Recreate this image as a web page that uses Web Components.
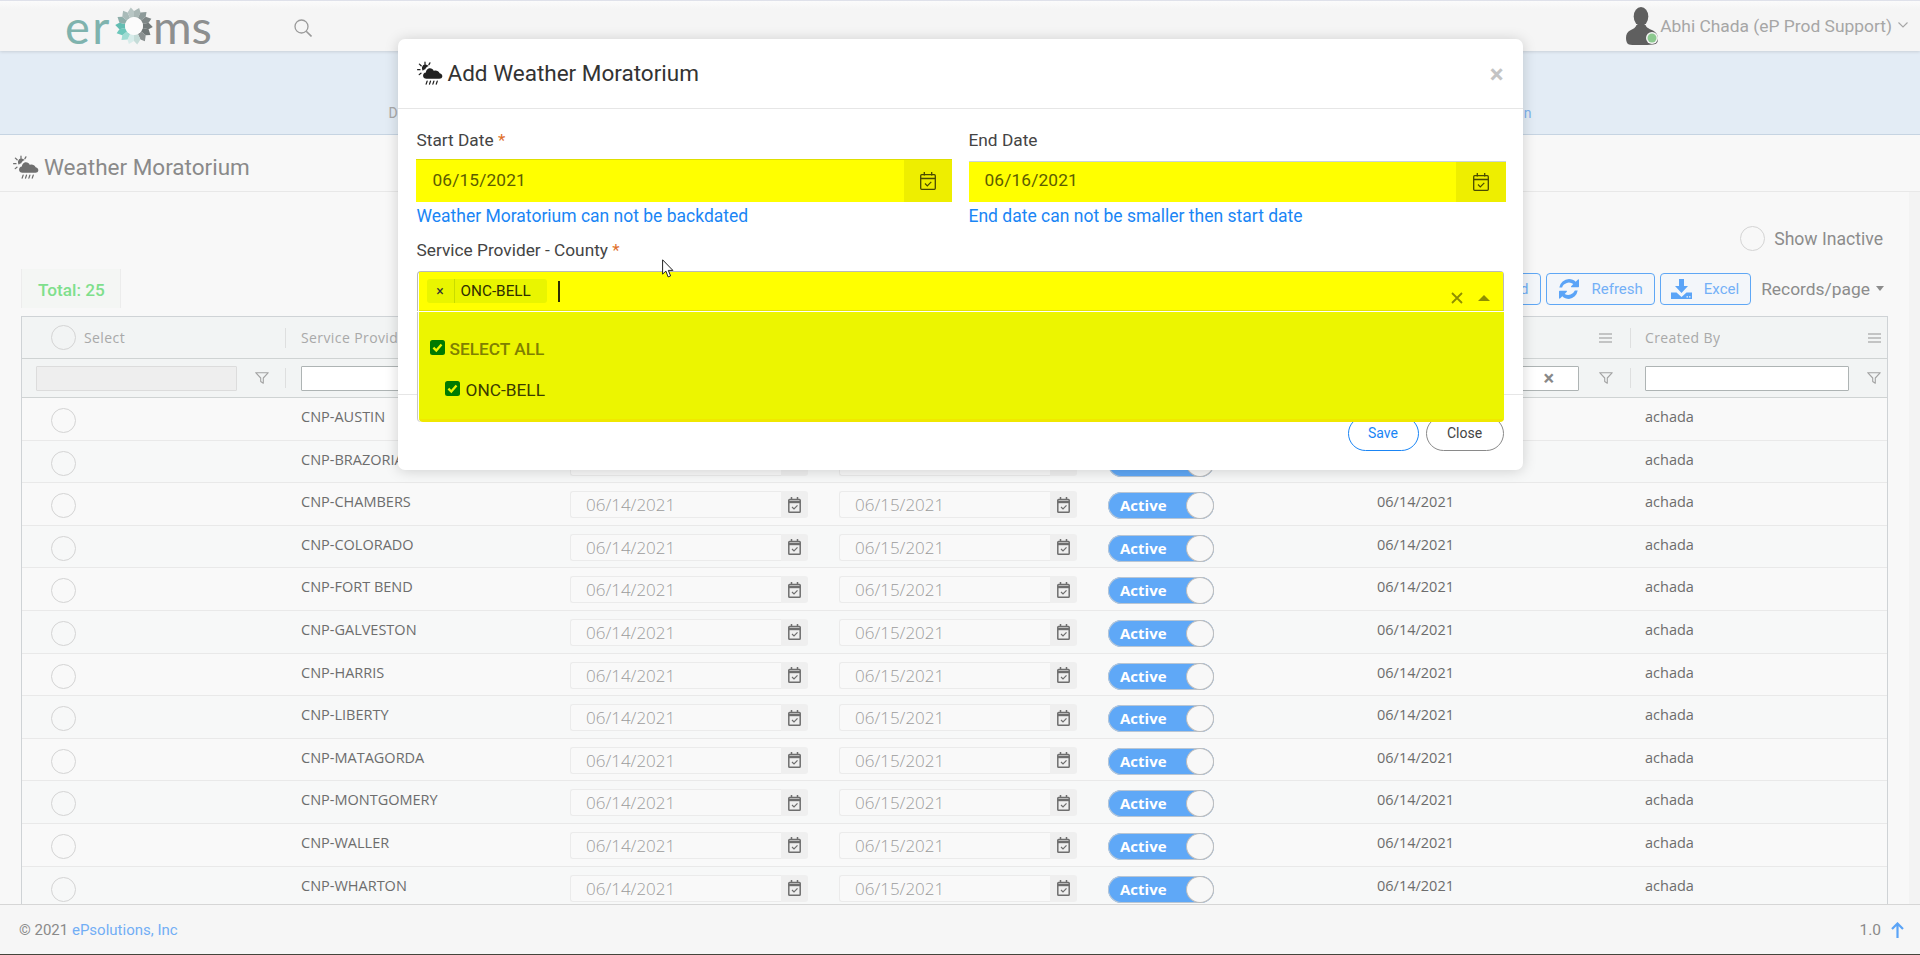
<!DOCTYPE html>
<html lang="en">
<head>
<meta charset="utf-8">
<title>Weather Moratorium</title>
<style>
  html,body{margin:0;padding:0;height:955px;overflow:hidden;}
  body{display:flex;flex-direction:column;font-family:Roboto,"Liberation Sans",sans-serif;background:#f8f8f8;color:#777;position:relative;}
</style>
</head>
<body>
<app-header></app-header>
<info-band></info-band>
<page-title></page-title>
<page-content></page-content>
<app-footer></app-footer>
<weather-modal></weather-modal>

<script>
const ICONS = {
  weather:(c)=>`<svg viewBox="0 0 27 24" width="100%" height="100%"><g fill="${c}"><path d="M6.5 3.6a5 5 0 0 1 5.7 1.2c-1.7.5-3 1.7-3.6 3.2-1.1.2-2 .8-2.6 1.6a5 5 0 0 1 .5-6z"/><path d="M12 7.2c2-.7 4.6.1 5.500 2.600 2.600-.900 5 .5 6 2.500 2 .500 3 2 2.800 3.400-.2 1.500-1.500 2.300-3 2.300H9.800c-2 0-3.500-1.300-3.500-3.200 0-1.700 1.200-3 2.900-3.200 0-1.900 1-3.700 2.800-4.400z"/></g><g stroke="${c}" stroke-width="1.300" fill="none" stroke-linecap="round"><path d="M8.300 .8v2.400M2.500 2.800l1.800 1.700M.6 8.600h2.500M2.300 13.700l1.800-1.500M13.400 1.500l-1 1.800"/><path d="M10.500 20.500l-1 3M14 20.500l-1 3M17.500 20.500l-1 3M21 20.500l-1 3"/></g></svg>`,
  calendar:(c)=>`<svg viewBox="0 0 16 18" width="100%" height="100%" fill="none" stroke="${c}" stroke-width="1.300"><rect x=".7" y="2.700" width="14.600" height="14.600" rx="1"/><path d="M.7 6.500h14.600M4.300 0v3.500M11.700 0v3.500"/><path d="M5 11.500l2.300 2.300 4-4" stroke-width="1.200"/></svg>`,
  calendarSmall:(c)=>`<svg viewBox="0 0 13 16" width="100%" height="100%" fill="none" stroke="${c}"><rect x=".8" y="2.500" width="11.400" height="12.700" rx=".8" stroke-width="1.500"/><path d="M.8 5h11.400" stroke-width="2.400"/><path d="M3.500 0v3M9.500 0v3" stroke-width="1.500"/><path d="M4 10l2 2 3.500-3.700" stroke-width="1.200"/></svg>`,
  funnel:(c)=>`<svg viewBox="0 0 14 12" width="100%" height="100%" fill="none" stroke="${c}" stroke-width="1.100" stroke-linejoin="round"><path d="M.7.700h12.600L8.300 6v5.200L5.700 9.500V6z"/></svg>`,
  menu:(c)=>`<svg viewBox="0 0 13 10" width="100%" height="100%" fill="none" stroke="${c}" stroke-width="1.300"><path d="M0 1h13M0 5h13M0 9h13"/></svg>`,
  search:(c)=>`<svg viewBox="0 0 18 18" width="100%" height="100%" fill="none" stroke="${c}" stroke-width="1.300"><circle cx="7.500" cy="7.500" r="6.500"/><path d="M12.200 12.200L17.500 17.500" stroke-width="1.600"/></svg>`,
  refresh:(c)=>`<svg viewBox="0 0 20 20" width="100%" height="100%" fill="${c}"><path d="M10 0c2.600 0 5 1 6.700 2.700L19 .5c.4-.4 1 0 1 .5v6.600c0 .4-.3.700-.7.700h-6.600c-.6 0-1-.7-.5-1.100l2.100-2.100A7.200 7.200 0 0 0 3.100 8.400H.3A10 10 0 0 1 10 0z"/><path d="M10 20c-2.600 0-5-1-6.700-2.700L1 19.500c-.4.400-1 0-1-.5v-6.600c0-.4.300-.7.700-.7h6.600c.6 0 1 .7.500 1.100l-2.100 2.100a7.200 7.200 0 0 0 10.200-3.300h2.800A10 10 0 0 1 10 20z"/></svg>`,
  download:(c)=>`<svg viewBox="0 0 21 20" width="100%" height="100%"><path fill="${c}" d="M8 0h5v7h4l-6.500 7L4 7h4z"/><path fill="${c}" d="M0 13.500h5.500l5 4.500 5-4.500H21V20H0z"/><path fill="#f3f6fa" d="M15.500 17.300h1.500v1.300h-1.500zM18 17.300h1.500v1.300H18z"/></svg>`,
  check:()=>`<svg viewBox="0 0 15 15" width="100%" height="100%"><rect width="15" height="15" rx="2.500" fill="#007a00"/><path d="M3.400 7.600l2.900 2.900 5.200-6" fill="none" stroke="#ecf500" stroke-width="2.300"/></svg>`,
  avatar:()=>`<svg viewBox="0 0 34 38" width="100%" height="100%"><ellipse cx="15" cy="9.500" rx="7.300" ry="9.500" fill="#5f5f5f"/><path d="M10.500 18c-1 3-3 3.500-6.500 5.500C1.300 25 0 27.500 0 31c0 3 1 6 3 6.500 4 1 15 1 24 0 4-.5 5-2 5-6 0-3.500-2-6.500-5-8-3-1.500-6.500-2.500-7.500-5.500z" fill="#5f5f5f"/><circle cx="26" cy="31" r="6" fill="#f5f5f5"/><circle cx="26" cy="31" r="4.500" fill="#8cc98f"/></svg>`,
  pointer:()=>`<svg viewBox="0 0 12 19" width="100%" height="100%"><path d="M.6.800v14.300l3.300-3 2.200 5.800 2.500-1-2.300-5.500h4.600z" fill="#fff" stroke="#222" stroke-width="1"/></svg>`
};
class XIcon extends HTMLElement{
  connectedCallback(){
    const r=this.attachShadow({mode:'open'});
    const w=this.getAttribute('w'),h=this.getAttribute('h');
    r.innerHTML=`<style>:host{display:inline-block;flex:none;line-height:0;width:${w}px;height:${h}px}</style>`+ICONS[this.getAttribute('name')](this.getAttribute('color')||'#666');
  }
}
customElements.define('x-icon',XIcon);

class GearMark extends HTMLElement{
  connectedCallback(){
    const r=this.attachShadow({mode:'open'});
    const n=14, colors=['#a9b7b5','#8d9a99','#7f8787','#737a7a','#6f7676','#8b9191','#c5dcd8','#d7ecea','#9fdcd3','#6cc7bb','#62bdb2','#8eaeaa','#a8bab8','#b8c6c4'];
    let polys='';
    for(let i=0;i<n;i++){
      const a0=(i/n)*Math.PI*2-Math.PI/2, st=Math.PI*2/n;
      const pt=(a,rad)=>`${(19+rad*Math.cos(a)).toFixed(2)},${(19+rad*Math.sin(a)).toFixed(2)}`;
      polys+=`<polygon fill="${colors[i]}" points="${pt(a0,9)} ${pt(a0,15)} ${pt(a0+st*.62,18.800)} ${pt(a0+st,15)} ${pt(a0+st,9)}"/>`;
    }
    r.innerHTML=`<style>:host{display:inline-block;width:38px;height:38px;flex:none;line-height:0}</style><svg viewBox="0 0 38 38" width="38" height="38">${polys}<circle cx="19" cy="19" r="9" fill="#fbfbfb"/></svg>`;
  }
}
customElements.define('gear-mark',GearMark);

class AppHeader extends HTMLElement{
  constructor(){super();this.attachShadow({mode:'open'}).innerHTML=`<style>
    :host{display:flex;align-items:center;height:51px;flex:none;box-sizing:border-box;border-top:1px solid #dfe1ea;background:linear-gradient(#fbfbfb,#f5f5f5 8px);box-shadow:0 1px 3px rgba(0,0,0,.12);position:relative;z-index:2;padding:0 12px 0 65px;}
    .logo{display:flex;align-items:center;width:143px;font-family:Lato,sans-serif;font-size:47px;line-height:38px;height:38px;margin-top:-1px}
    .er{color:#7fb3ae;font-weight:400;margin-right:3px;letter-spacing:2.500px}.ms{color:#8d8f8f;font-weight:400}
    gear-mark{margin-right:0}
    .search{margin-left:86px;margin-top:4px}
    .user{margin-left:auto;display:flex;align-items:center;font-size:17.400px;color:#a6a6a6;}
    .chev{margin-left:6px;margin-bottom:3px}
  </style>
  <div class="logo"><span class="er">er</span><gear-mark></gear-mark><span class="ms">ms</span></div>
  <x-icon class="search" name="search" w="18" h="18" color="#9a9a9a"></x-icon>
  <div class="user"><x-icon name="avatar" w="34" h="38"></x-icon><span>Abhi Chada (eP Prod Support)</span>
  <svg class="chev" width="10" height="6" viewBox="0 0 10 6" fill="none" stroke="#a6a6a6" stroke-width="1.100"><path d="M.5.500L5 5l4.500-4.500"/></svg></div>`;}
}
customElements.define('app-header',AppHeader);

class InfoBand extends HTMLElement{
  constructor(){super();this.attachShadow({mode:'open'}).innerHTML=`<style>
    :host{display:flex;flex:none;height:84px;box-sizing:border-box;background:#e3ecf5;border-bottom:1px solid #c6d4e2;justify-content:center;align-items:flex-end;padding-bottom:13px;font-size:14px}
    div{width:1143px;display:flex;justify-content:space-between}
    .a{color:#a8a8a8}.b{color:#7fb2ee}
  </style><div><span class="a">D</span><span class="b">n</span></div>`;}
}
customElements.define('info-band',InfoBand);

class PageTitle extends HTMLElement{
  constructor(){super();this.attachShadow({mode:'open'}).innerHTML=`<style>
    :host{display:flex;flex:none;align-items:center;height:57px;box-sizing:border-box;border-bottom:1px solid #e8e8e8;padding:8px 0 0 13px;font-size:22.500px;color:#8a8a8a}
    x-icon{margin-right:5px}
  </style><x-icon name="weather" w="26" h="24" color="#6f6f6f"></x-icon><span>Weather Moratorium</span>`;}
}
customElements.define('page-title',PageTitle);

class RadioCircle extends HTMLElement{
  constructor(){super();this.attachShadow({mode:'open'}).innerHTML=`<style>
    :host{display:inline-block;flex:none;width:25px;height:25px;box-sizing:border-box;border:1px solid #d4d4d4;border-radius:50%;background:transparent}
  </style>`;}
}
customElements.define('radio-circle',RadioCircle);

class ToolButton extends HTMLElement{
  constructor(){super();this.attachShadow({mode:'open'}).innerHTML=`<style>
    :host{display:inline-flex;align-items:center;gap:var(--gap,13px);height:32px;box-sizing:border-box;padding:0 11px 0 var(--pl,12px);border:1px solid #5fa7f5;border-radius:4px;color:#73b0f7;font-size:15px;background:#f3f6fa;margin-left:var(--ml,0)}
  </style><slot name="i"></slot><slot></slot>`;}
}
customElements.define('tool-button',ToolButton);

class DateField extends HTMLElement{
  constructor(){super();this.attachShadow({mode:'open'}).innerHTML=`<style>
    :host{display:inline-flex;flex:none;height:27px;width:238px;box-sizing:border-box;font-size:17px;color:#9c9c9c}
    .v{flex:1;box-sizing:border-box;border:1px solid #ebebeb;border-right:0;border-radius:3px 0 0 3px;padding-left:15px;line-height:26px;background:#f9f9f9;font-weight:300}
    .a{width:27px;background:#efefef;border-radius:0 3px 3px 0;display:flex;align-items:center;justify-content:center}
  </style><div class="v"><slot></slot></div><div class="a"><x-icon name="calendarSmall" w="13" h="16" color="#6e6e6e"></x-icon></div>`;}
}
customElements.define('date-field',DateField);

class ToggleSwitch extends HTMLElement{
  constructor(){super();this.attachShadow({mode:'open'}).innerHTML=`<style>
    :host{display:inline-flex;flex:none;width:106px;height:27px;box-sizing:border-box;border-radius:14px;background:#5fa8f7;position:relative;color:#fff;font-weight:700;font-size:15px;line-height:27px;padding-left:12px;box-shadow:inset 0 0 0 1px #b9c6d4}
    i{position:absolute;right:0;top:0;width:28px;height:27px;box-sizing:border-box;border-radius:50%;background:#f8f8f8;border:1px solid #bdbdbd}
  </style><slot></slot><i></i>`;}
}
customElements.define('toggle-switch',ToggleSwitch);

class DataTable extends HTMLElement{
  connectedCallback(){
    const names=['AUSTIN','BRAZORIA','CHAMBERS','COLORADO','FORT BEND','GALVESTON','HARRIS','LIBERTY','MATAGORDA','MONTGOMERY','WALLER','WHARTON'];
    const heads=['Service Provider','Start Date','End Date','Status','Created Date','Created By'];
    const menu=`<x-icon name="menu" w="13" h="10" color="#b4b4b4"></x-icon>`;
    const fun=`<x-icon name="funnel" w="14" h="12" color="#a3a3a3"></x-icon>`;
    const headCells=heads.map(h=>`<div class="hc sep"><span>${h}</span>${menu}</div>`).join('');
    const filterCells=heads.map((h,i)=>`<div class="fc sep"><div class="in${i==4?' x':''}">${i==4?'<b>×</b>':''}</div>${fun}</div>`).join('');
    const rows=names.map((n,i)=>`<div class="row ${i%2?'even':''}">
      <div class="c first"><radio-circle></radio-circle></div>
      <div class="c txt">CNP-${n}</div>
      <div class="c dt"><date-field>06/14/2021</date-field></div>
      <div class="c dt"><date-field>06/15/2021</date-field></div>
      <div class="c tg"><toggle-switch>Active</toggle-switch></div>
      <div class="c txt">06/14/2021</div>
      <div class="c txt">achada</div>
    </div>`).join('');
    this.attachShadow({mode:'open'}).innerHTML=`<style>
      :host{display:block;flex:1;min-height:0;overflow:hidden;box-sizing:border-box;border:1px solid #cfd3d6;border-bottom:0;font-family:"Open Sans",sans-serif;font-size:14px;color:#6d6d6d}
      .g{display:grid;grid-template-columns:263px repeat(5,269px) 1fr;box-sizing:border-box}
      .head{height:42px;background:#f2f4f4;border-bottom:1px solid #cfd3d3;color:#a9a9a9}
      .filter{height:39px;background:#f2f4f4;border-bottom:1px solid #cfd3d3}
      .hc,.h1{display:flex;align-items:center;justify-content:space-between;padding:0 18px 0 16px;letter-spacing:.4px}
      .h1{justify-content:flex-start;gap:8px;padding-left:29px}
      .sep{background:linear-gradient(#dedfdf,#dedfdf) left center/1px 20px no-repeat}
      .hc:last-child,.fc:last-child{padding-right:6px;padding-left:15px}
      .hc span{white-space:nowrap;overflow:hidden}
      .fc{display:flex;align-items:center;gap:18px;padding:0 17px 0 16px}
      .fc.f1{padding:0 16px 0 14px}
      .in{flex:1;height:25px;box-sizing:border-box;border:1px solid #aeb4b4;background:#fff;display:flex;align-items:center;justify-content:flex-end;min-width:0;border-radius:1px}
      .in.off{background:#eeeeee;border-color:#dcdcdc}
      .in.x{margin-right:2px;padding-right:24px}
      .in b{color:#888;font-size:20px;font-family:Roboto,sans-serif;font-weight:700}
      .row{display:grid;grid-template-columns:263px repeat(5,269px) 1fr;height:42.600px;box-sizing:border-box;border-bottom:1px solid #e9e9e9;background:#f9f9f9;font-size:14.500px}
      .row.even{background:#f7f8f8}
      .c{box-sizing:border-box;padding-left:16px;white-space:nowrap}
      .c:last-child{padding-left:15px}
      .first{padding:10px 0 0 29px}
      .txt{padding-top:9px;line-height:20px}
      .dt{padding-top:8px}
      .tg{padding-top:9px}
    </style>
    <div class="g head"><div class="h1"><radio-circle></radio-circle><span>Select</span></div>${headCells}</div>
    <div class="g filter"><div class="fc f1"><div class="in off"></div>${fun}</div>${filterCells}</div>
    ${rows}`;
  }
}
customElements.define('data-table',DataTable);

class PageContent extends HTMLElement{
  constructor(){super();this.attachShadow({mode:'open'}).innerHTML=`<style>
    :host{display:flex;flex-direction:column;flex:1;min-height:0;box-sizing:border-box;padding:34px 21px 0 21px;border-right:11px solid #f3f3f3;background:#f8f8f8}
    .inactive{display:flex;justify-content:flex-end;align-items:center;gap:9px;height:25px;font-size:17.600px;color:#8c8c8c;padding-right:5px;flex:none}
    .bar{display:flex;align-items:center;height:39px;margin:18px 0 8px;flex:none}
    .total{height:39px;width:100px;box-sizing:border-box;background:#f4f6f4;border:1px solid #ececec;border-width:0 1px;color:#7fdf8c;font-size:17.200px;font-weight:500;line-height:42px;padding-left:16px}
    .r{margin-left:auto;display:flex;align-items:center}
    .rec{margin-left:10px;font-size:17.400px;color:#8c8c8c;display:flex;align-items:center;gap:6px;margin-right:4px}
    .car{width:0;height:0;border:4.500px solid transparent;border-top:5px solid #8c8c8c;border-bottom:0}
    tool-button+tool-button{--ml:5px}
    .xl{--pl:10px;--gap:12px}
  </style>
  <div class="inactive"><radio-circle></radio-circle><span>Show Inactive</span></div>
  <div class="bar"><div class="total">Total: 25</div>
    <div class="r"><tool-button>Add</tool-button>
    <tool-button><x-icon slot="i" name="refresh" w="20" h="20" color="#5ba4f7"></x-icon>Refresh</tool-button>
    <tool-button class="xl"><x-icon slot="i" name="download" w="21" h="20" color="#5ba4f7"></x-icon>Excel</tool-button>
    <div class="rec"><span>Records/page</span><i class="car"></i></div></div>
  </div>
  <data-table></data-table>`;}
}
customElements.define('page-content',PageContent);

class AppFooter extends HTMLElement{
  constructor(){super();this.attachShadow({mode:'open'}).innerHTML=`<style>
    :host{display:flex;flex:none;align-items:center;justify-content:space-between;height:51px;box-sizing:border-box;border-top:1px solid #d6d6d6;border-bottom:1px solid #45453c;background:#f6f6f6;padding:0 16px 0 19px;font-size:15px;color:#8a8a8a;position:relative;z-index:1}
    a{color:#72aef5;text-decoration:none}
    .v{font-size:15.500px;display:flex;align-items:center;gap:10px}
  </style><div>© 2021 <a>ePsolutions, Inc</a></div>
  <div class="v"><span>1.0</span><svg width="13" height="16" viewBox="0 0 13 16" fill="none" stroke="#5ba4f7" stroke-width="2.200"><path d="M6.500 16V1.500M1 7l5.500-5.500L12 7"/></svg></div>`;}
}
customElements.define('app-footer',AppFooter);

class FormDate extends HTMLElement{
  connectedCallback(){
    const shift=this.hasAttribute('bleed');
    this.attachShadow({mode:'open'}).innerHTML=`<style>
      :host{display:flex;height:${shift?43:41}px;margin:${shift?'-2px 0 0 -1px':'0 -2px 0 0'};box-sizing:border-box;border-top:1px solid ${shift?'#dede00':'#c9d4dc'};font-size:17.300px;color:#5c5c00;background:#ffff00}
      .v{flex:1;padding-left:${shift?17:16}px;line-height:${shift?41:37}px;letter-spacing:.15px}
      .a{width:${shift?48:50}px;background:#eeee00;display:flex;align-items:center;justify-content:center}
    </style><div class="v"><slot></slot></div><div class="a"><x-icon name="calendar" w="16" h="18" color="#4a4a00"></x-icon></div>`;
  }
}
customElements.define('form-date',FormDate);

class MultiSelect extends HTMLElement{
  constructor(){super();this.attachShadow({mode:'open'}).innerHTML=`<style>
    :host{display:block;height:40px;position:relative;box-sizing:border-box;border:1px solid #b9b9b9;border-bottom:0;border-radius:4px 4px 0 0}
    .ctl{display:flex;align-items:center;height:39px;background:#ffff00;margin-left:1px;padding:0 0 0 8px;box-sizing:border-box;border-bottom:1px solid #e6e600}
    .chip{display:flex;align-items:center;height:24px;width:120px;background:#e9f500;border-radius:3px;font-size:15.300px;color:#2e2e00}
    .chip b{width:28px;border-right:1px solid #c9dc00;height:24px;font-weight:400;text-align:center;line-height:24px;font-size:14px;box-sizing:border-box;color:#333}
    .chip span{padding-left:6px}
    .caret{width:2px;height:21px;background:#2e2e00;margin:1px 0 0 11px}
    .end{margin-left:auto;display:flex;align-items:center;gap:15px;padding-right:13px;margin-top:13px}
    .tri{width:0;height:0;border:6px solid transparent;border-bottom:6px solid #8f8f00;border-top:0}
    .panel{position:absolute;left:1px;right:-1px;top:40px;height:110px;box-sizing:border-box;background:#ecf500;border-bottom:3px solid #f0e800;border-radius:0 0 4px 4px;padding-top:27px;box-shadow:-1px 0 0 #fff,-2px 0 0 #c6c6c6}
    .it{display:flex;align-items:center;height:20px;font-size:17.300px}
    .all{padding-left:11px;color:#7f8000;font-weight:500;gap:5px}
    .one{padding-left:26px;color:#3b3b00;gap:6px;margin-top:21px}
    .it x-icon{margin-top:-3px}
  </style>
  <div class="ctl">
    <div class="chip"><b>×</b><span>ONC-BELL</span></div><i class="caret"></i>
    <div class="end"><svg width="12" height="12" viewBox="0 0 12 12" stroke="#8f8f00" stroke-width="1.800" fill="none"><path d="M1 1l10 10M11 1L1 11"/></svg><i class="tri"></i></div>
  </div>
  <div class="panel">
    <div class="it all"><x-icon name="check" w="15" h="15"></x-icon><span>SELECT ALL</span></div>
    <div class="it one"><x-icon name="check" w="15" h="15"></x-icon><span>ONC-BELL</span></div>
  </div>`;}
}
customElements.define('multi-select',MultiSelect);

class WeatherModal extends HTMLElement{
  constructor(){super();this.attachShadow({mode:'open'}).innerHTML=`<style>
    :host{position:absolute;top:39px;left:0;right:0;margin:0 auto;width:1125px;height:431px;box-sizing:border-box;background:#fff;border-radius:7px;box-shadow:0 1px 14px rgba(0,0,0,.17);z-index:5;display:flex;flex-direction:column;color:#3d3d3d;font-size:16px}
    .top{display:flex;align-items:center;height:70px;box-sizing:border-box;border-bottom:1px solid #e6e6e6;padding:0 19px 2px;font-size:22.500px;color:#333;flex:none}
    .top x-icon{margin-right:5px}
    .x{margin-left:auto;color:#c4c4c4;font-size:26px;font-weight:700;margin-top:3px;line-height:1}
    .body{height:285px;box-sizing:border-box;padding:19px 19px 0;flex:none}
    .two{display:grid;grid-template-columns:535px 535px;gap:17px}
    label{display:block;line-height:25px;height:26px;margin-bottom:7px;white-space:nowrap;color:#444;font-size:17.300px}
    label em{font-style:normal;color:#e0702c;font-size:17px}
    .hint{color:#1a85f5;line-height:24px;margin-top:2px;font-size:17.500px;white-space:nowrap}
    .sp{margin-top:10px}
    .foot{flex:1;border-top:1px solid #e6e6e6;display:flex;justify-content:flex-end;gap:7px;padding:21px 19px 0 0}
    .b{height:35px;box-sizing:border-box;border:1px solid #1a85f5;color:#1a85f5;border-radius:18px;font-size:14px;line-height:33px;text-align:center;width:71px;background:#fff}
    .c{width:78px;border-color:#8a8a8a;color:#444}
    .ptr{position:absolute;left:264px;top:220px;z-index:3}
  </style>
  <div class="top"><x-icon name="weather" w="26" h="24" color="#222"></x-icon><span>Add Weather Moratorium</span><span class="x">×</span></div>
  <div class="body">
    <div class="two">
      <div><label>Start Date <em>*</em></label><form-date bleed>06/15/2021</form-date><div class="hint">Weather Moratorium can not be backdated</div></div>
      <div><label>End Date</label><form-date>06/16/2021</form-date><div class="hint">End date can not be smaller then start date</div></div>
    </div>
    <div class="sp"><label>Service Provider - County <em>*</em></label><multi-select></multi-select></div>
  </div>
  <div class="foot"><div class="b">Save</div><div class="b c">Close</div></div>
  <x-icon class="ptr" name="pointer" w="12" h="19"></x-icon>`;}
}
customElements.define('weather-modal',WeatherModal);
</script>
</body>
</html>
